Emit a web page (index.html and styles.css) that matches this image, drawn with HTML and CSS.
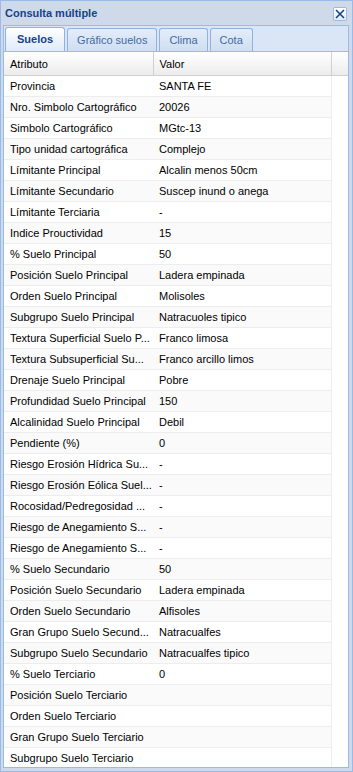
FILE: index.html
```html
<!DOCTYPE html>
<html lang="es">
<head>
  <meta charset="UTF-8" />
  <meta name="viewport" content="width=device-width, initial-scale=1.0" />
  <title>Consulta múltiple</title>
  <link rel="stylesheet" href="styles.css">
</head>
<body>
  <div class="window">
    <div class="window-header">
      <span class="window-title">Consulta múltiple</span>
      <button class="tool-close" title="Cerrar">
        <svg width="10" height="10" viewBox="0 0 10 10"><path d="M1 1L9 9M9 1L1 9" stroke="#15428b" stroke-width="1.6" fill="none"/></svg>
      </button>
    </div>

    <div class="tab-strip">
      <div class="tab active">Suelos</div>
      <div class="tab">Gráfico suelos</div>
      <div class="tab">Clima</div>
      <div class="tab">Cota</div>
    </div>

    <div class="grid">
      <table>
        <colgroup>
          <col class="col-attr">
          <col class="col-value">
          <col class="col-scroll">
        </colgroup>
        <thead>
          <tr>
            <th>Atributo</th>
            <th>Valor</th>
            <th></th>
          </tr>
        </thead>
        <tbody id="rows"></tbody>
      </table>
    </div>
  </div>

  <script>
    const data = [
      ['Provincia', 'SANTA FE'],
      ['Nro. Simbolo Cartográfico', '20026'],
      ['Simbolo Cartográfico', 'MGtc-13'],
      ['Tipo unidad cartográfica', 'Complejo'],
      ['Límitante Principal', 'Alcalin menos 50cm'],
      ['Límitante Secundario', 'Suscep inund o anega'],
      ['Límitante Terciaria', '-'],
      ['Indice Prouctividad', '15'],
      ['% Suelo Principal', '50'],
      ['Posición Suelo Principal', 'Ladera empinada'],
      ['Orden Suelo Principal', 'Molisoles'],
      ['Subgrupo Suelo Principal', 'Natracuoles tipico'],
      ['Textura Superficial Suelo P...', 'Franco limosa'],
      ['Textura Subsuperficial Su...', 'Franco arcillo limos'],
      ['Drenaje Suelo Principal', 'Pobre'],
      ['Profundidad Suelo Principal', '150'],
      ['Alcalinidad Suelo Principal', 'Debil'],
      ['Pendiente (%)', '0'],
      ['Riesgo Erosión Hídrica Su...', '-'],
      ['Riesgo Erosión Eólica Suel...', '-'],
      ['Rocosidad/Pedregosidad ...', '-'],
      ['Riesgo de Anegamiento S...', '-'],
      ['Riesgo de Anegamiento S...', '-'],
      ['% Suelo Secundario', '50'],
      ['Posición Suelo Secundario', 'Ladera empinada'],
      ['Orden Suelo Secundario', 'Alfisoles'],
      ['Gran Grupo Suelo Secund...', 'Natracualfes'],
      ['Subgrupo Suelo Secundario', 'Natracualfes tipico'],
      ['% Suelo Terciario', '0'],
      ['Posición Suelo Terciario', ''],
      ['Orden Suelo Terciario', ''],
      ['Gran Grupo Suelo Terciario', ''],
      ['Subgrupo Suelo Terciario', '']
    ];

    const tbody = document.getElementById('rows');
    data.forEach(row => {
      tbody.innerHTML += `<tr><td>${row[0]}</td><td>${row[1]}</td><td class="scroll-cell"></td></tr>`;
    });
  </script>
</body>
</html>
```

FILE: styles.css
```css
body {
  margin: 0;
  font-family: 'Liberation Sans', Arial, sans-serif;
  font-size: 11px;
  color: #000;
  background: #fff;
}

.window {
  width: 353px;
  height: 772px;
  box-sizing: border-box;
  border: 1px solid #99bbe8;
  background: #cedaea;
  padding: 0 3px 3px 2px;
  display: flex;
  flex-direction: column;
  overflow: hidden;
}

.window-header {
  height: 24px;
  display: flex;
  align-items: center;
  justify-content: space-between;
  padding: 0 2px 0 2px;
  flex-shrink: 0;
}

.window-title {
  font-weight: bold;
  color: #15428b;
}

.tool-close {
  width: 14px;
  height: 14px;
  padding: 0;
  margin-top: 1px;
  border: 1px solid #99bbe8;
  border-radius: 2px;
  background: linear-gradient(#ffffff, #e4ecf7);
  display: flex;
  align-items: center;
  justify-content: center;
}

.tab-strip {
  height: 26px;
  flex-shrink: 0;
  box-sizing: border-box;
  border: 1px solid #99bbe8;
  border-bottom: none;
  background: #dae6f6;
  display: flex;
  align-items: flex-end;
  padding-left: 1px;
  gap: 2px;
}

.tab {
  height: 23px;
  box-sizing: border-box;
  line-height: 22px;
  padding: 0 9px;
  border: 1px solid #8db2e3;
  border-bottom: none;
  border-radius: 3px 3px 0 0;
  background: linear-gradient(#e4edf9, #cfdef2);
  color: #416aa3;
}

.tab.active {
  font-weight: bold;
  color: #15428b;
  padding: 0 11px;
  height: 24px;
  line-height: 23px;
  background: linear-gradient(#ffffff, #dfeafa);
}

.grid {
  flex: 1;
  border: 1px solid #99bbe8;
  background: #fff;
  overflow: hidden;
}

table {
  width: 100%;
  border-collapse: collapse;
  table-layout: fixed;
}

.col-attr {
  width: 149px;
}

.col-scroll {
  width: 17px;
}

th {
  height: 23px;
  padding: 0 6px;
  text-align: left;
  font-weight: normal;
  background: linear-gradient(#ffffff, #ececec);
  border-bottom: 1px solid #d0d0d0;
  border-right: 1px solid #d0d0d0;
}

th:last-child {
  border-right: none;
}

td {
  height: 20px;
  padding: 0 6px;
  white-space: nowrap;
  overflow: hidden;
  border-bottom: 1px solid #ededed;
}

tbody tr:nth-child(even) td {
  background: #fafafa;
}

tbody tr td.scroll-cell {
  background: #fff;
  border-bottom: none;
  border-left: 1px solid #ededed;
}
```
